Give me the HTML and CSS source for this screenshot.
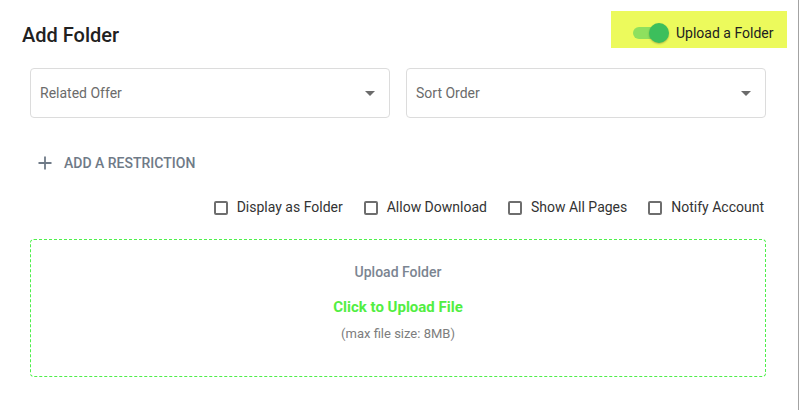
FILE: index.html
```html
<!DOCTYPE html>
<html lang="en">
<head>
<meta charset="utf-8">
<title>Add Folder</title>
<link rel="stylesheet" href="styles.css">
</head>
<body>
<div class="page">
  <header class="header">
    <h1 class="title">Add Folder</h1>
    <div class="toggle-box">
      <span class="toggle"><span class="track"></span><span class="knob"></span></span>
      <span class="toggle-label">Upload a Folder</span>
    </div>
  </header>

  <div class="selects">
    <div class="select">
      <span class="placeholder">Related Offer</span>
      <span class="caret"></span>
    </div>
    <div class="select">
      <span class="placeholder">Sort Order</span>
      <span class="caret"></span>
    </div>
  </div>

  <div class="add-restriction">
    <svg class="plus" width="14" height="14" viewBox="0 0 14 14"><path d="M7 0.5V13.5M0.5 7H13.5" stroke="#6f7a87" stroke-width="1.8" fill="none"/></svg>
    <span>ADD A RESTRICTION</span>
  </div>

  <div class="checks">
    <label class="check"><span class="box"></span>Display as Folder</label>
    <label class="check"><span class="box"></span>Allow Download</label>
    <label class="check"><span class="box"></span>Show All Pages</label>
    <label class="check"><span class="box"></span>Notify Account</label>
  </div>

  <div class="dropzone">
    <div class="dz-title">Upload Folder</div>
    <div class="dz-link">Click to Upload File</div>
    <div class="dz-note">(max file size: 8MB)</div>
  </div>
</div>
</body>
</html>
```

FILE: styles.css
```css
* { box-sizing: border-box; }
html, body { margin: 0; padding: 0; background: #fff; }
body { font-family: Roboto, "Liberation Sans", Arial, sans-serif; color: #212121; }

.page {
  width: 799px;
  min-height: 410px;
  border-right: 1px solid #a3a3a3;
}

.header {
  display: flex;
  justify-content: space-between;
  align-items: flex-start;
  padding: 11px 11px 0 22px;
}
.title {
  margin: 12px 0 0;
  font-size: 20px;
  line-height: 24px;
  font-weight: 500;
  color: #212121;
}
.toggle-box {
  display: flex;
  align-items: center;
  height: 37px;
  width: 176px;
  padding: 7px 0 0 22px;
  background: #ecfa5c;
}
.toggle {
  position: relative;
  width: 36px;
  height: 20px;
  flex: none;
}
.track {
  position: absolute;
  left: 0;
  top: 4px;
  width: 34px;
  height: 12px;
  border-radius: 6px;
  background: #8ee05e;
}
.knob {
  position: absolute;
  left: 16px;
  top: 0;
  width: 20px;
  height: 20px;
  border-radius: 50%;
  background: #3cbf5c;
  box-shadow: 0 1px 2px rgba(0,0,0,0.25);
}
.toggle-label {
  margin-left: 7px;
  font-size: 14px;
  line-height: 20px;
  color: #212121;
}

.selects {
  display: flex;
  gap: 16px;
  padding: 0 32px 0 30px;
  margin-top: 20px;
}
.select {
  flex: 1;
  height: 50px;
  border: 1px solid #dcdcdc;
  border-radius: 4px;
  display: flex;
  align-items: center;
  justify-content: space-between;
  padding: 0 14px 0 9px;
}
.placeholder {
  font-size: 14px;
  color: #6b6b6b;
}
.caret {
  width: 0;
  height: 0;
  border-left: 5px solid transparent;
  border-right: 5px solid transparent;
  border-top: 5px solid #6b6b6b;
}

.add-restriction {
  display: flex;
  align-items: center;
  gap: 12px;
  margin-top: 35px;
  padding-left: 38px;
  height: 20px;
  font-size: 14px;
  font-weight: 500;
  color: #6f7a87;
}

.checks {
  display: flex;
  justify-content: flex-end;
  gap: 21px;
  margin-top: 24px;
  padding-right: 34px;
}
.check {
  display: flex;
  align-items: center;
  font-size: 14px;
  line-height: 20px;
  color: #333;
}
.box {
  width: 14px;
  height: 14px;
  border: 2px solid #6e6e6e;
  border-radius: 2px;
  margin: 2px 9px 0 0;
  flex: none;
}

.dropzone {
  margin: 22px 32px 0 30px;
  height: 138px;
  border: 1px dashed #4ef04a;
  border-radius: 4px;
  text-align: center;
  padding-top: 22px;
}
.dz-title {
  font-size: 14px;
  line-height: 20px;
  font-weight: 500;
  color: #7b8591;
}
.dz-link {
  margin-top: 15px;
  font-size: 15px;
  line-height: 20px;
  font-weight: 700;
  color: #52ee42;
}
.dz-note {
  margin-top: 9px;
  font-size: 13px;
  line-height: 16px;
  color: #7d7d7d;
}
```
